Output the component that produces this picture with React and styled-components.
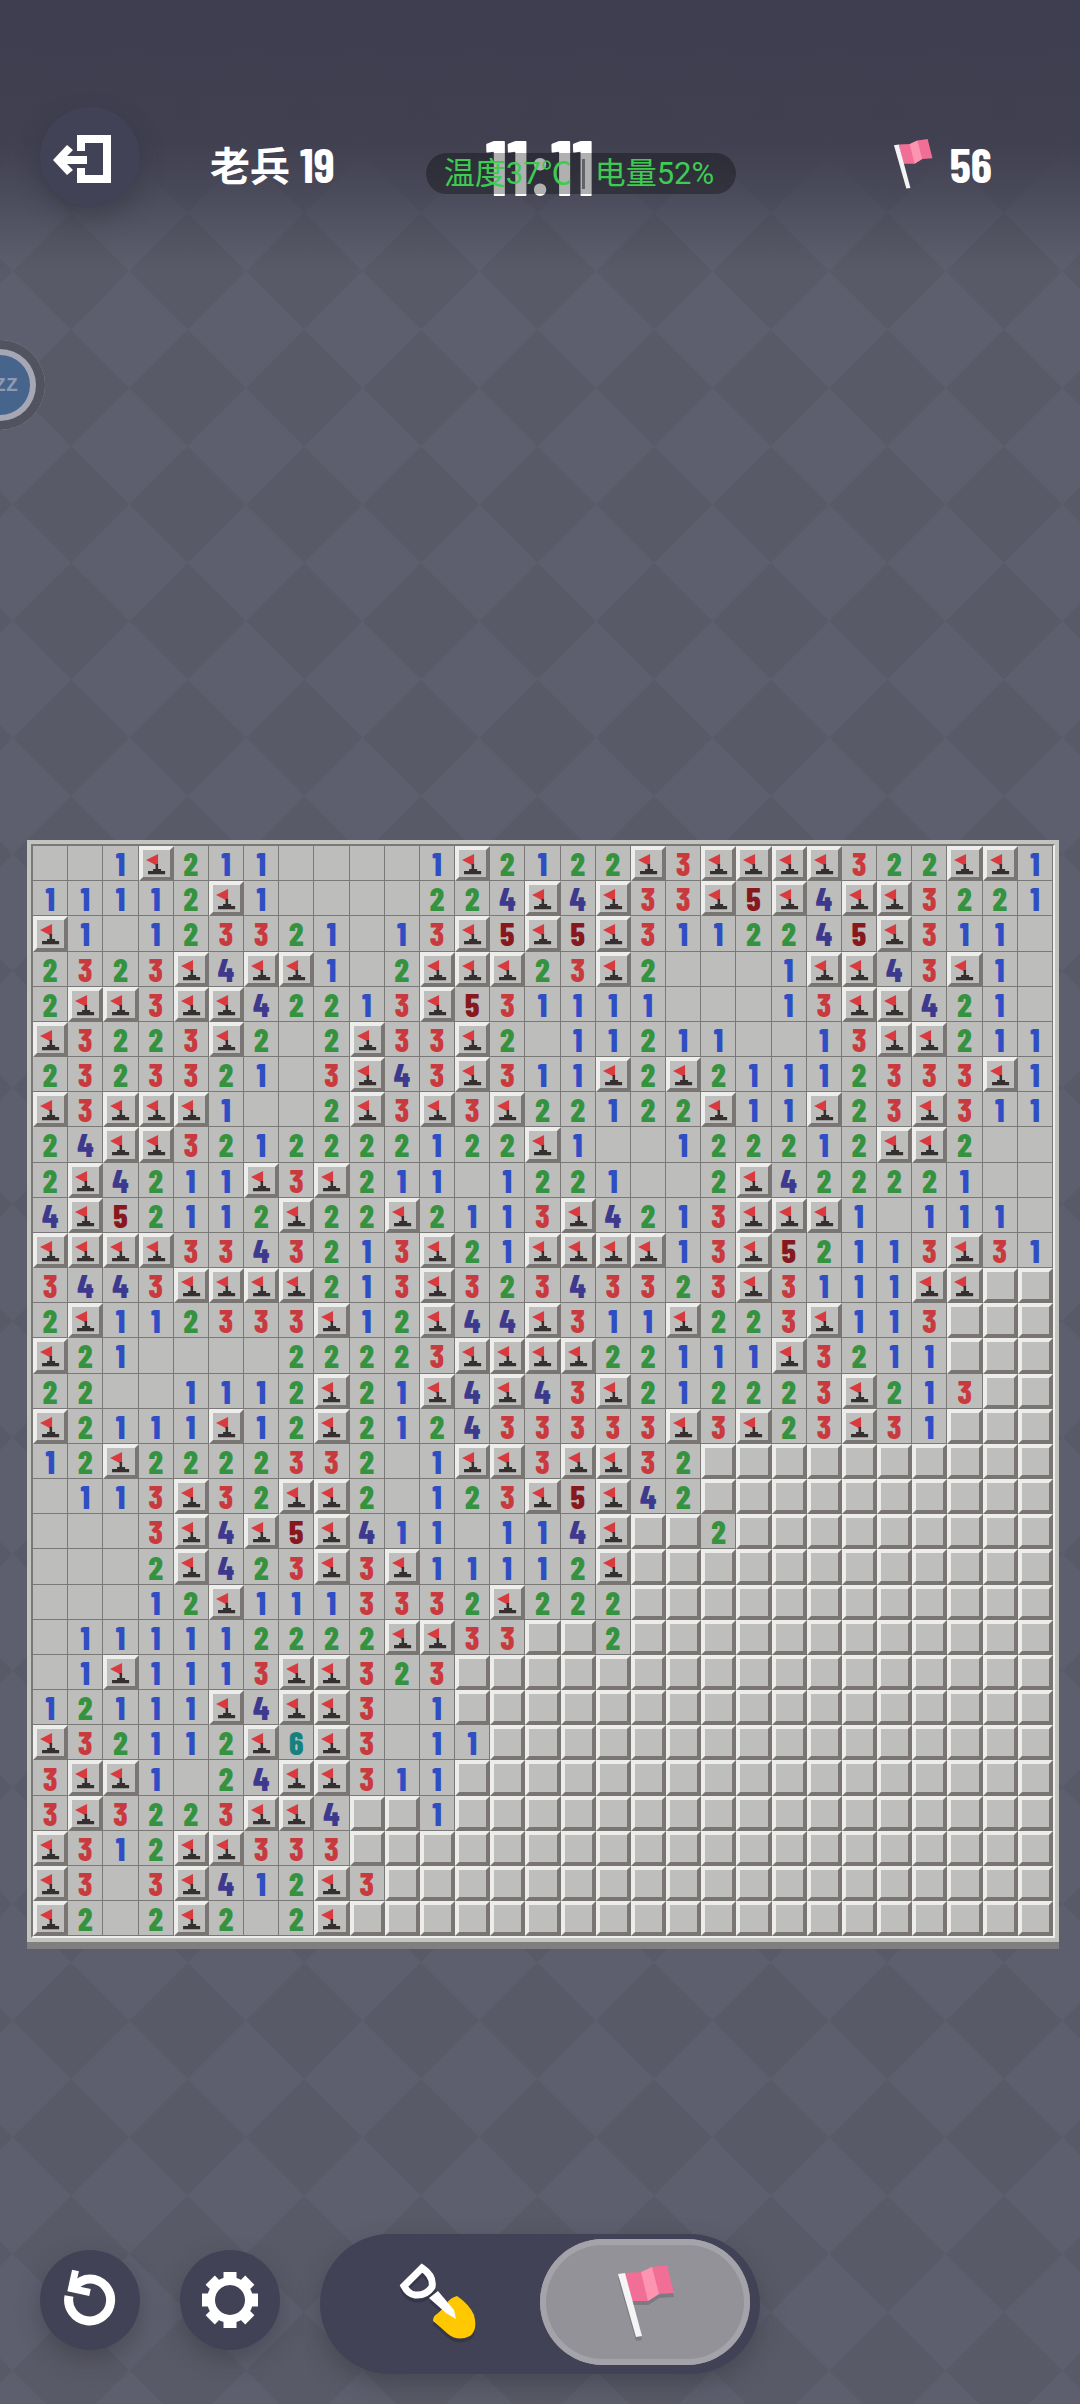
import React, { useState } from 'react'
import styled, { createGlobalStyle } from 'styled-components';

const COLUMNS = 29

// "." opened, "F" flagged, "#" still covered, the tail of a row is covered
const ROWS = [
  '..1F211....1F2122F3FFFF322FF1',
  '11112F1....224F4F33F5F4FF3221',
  'F1.123321.13F5F5F3112245F311.',
  '2323F4FF1.2FFF23F2...1FF43F1.',
  '2FF3FF42213F531111...13FF421.',
  'F3223F2.2F33F2.11211..13FF211',
  '2323321.3F43F311F2F21112333F1',
  'F3FFF1..2F3F3F22122F11F23F311',
  '24FF321222' + '2122F1..12' + '2212FF2..',
  '2F4211F3F2' + '11.1221..2' + 'F422221..',
  '4F52112F22' + 'F2113F4213' + 'FFF1.111.',
  'FFFF334321' + '3F21FFFF13' + 'F52113F31',
  '3443FFFF21' + '3F32343323' + 'F3111FF',
  '2F112333F1' + '2F44F311F2' + '23F113',
  'F21....222' + '23FFFF2211' + '1F3211',
  '22..1112F2' + '1F4F43F212' + '223F213',
  'F2111F12F2' + '12433333F3' + 'F23F31',
  '12F2222332' + '.1FF3FF32',
  '.113F32FF2' + '.123F5F42',
  '...3F4F5F4' + '11.114F##2',
  '...2F423F3' + 'F11112F',
  '...12F1113' + '332F222',
  '.111112222' + 'FF33##2',
  '.1F1113FF3' + '23',
  '12111F4FF3' + '.1',
  'F32112F6F3' + '.11',
  '3FF1.24FF3' + '11',
  '3F3223FF4#' + '#1',
  'F312FF333',
  'F3.3F412F3',
  'F2.2F2.2F',
].map((row) => row.padEnd(COLUMNS, '#'))

const NUMBER_COLORS = {
  1: '#2f4ec4',
  2: '#35923e',
  3: '#c93a3e',
  4: '#3d3a8e',
  5: '#86181e',
  6: '#16827f',
}

const MineFlag = () => (
  <CellFlag viewBox="0 0 35 35" aria-hidden="true">
    <path d="M7 14 L19 8 V19 H16.5 Z" fill="#d83a3e" />
    <path d="M16.5 18 H19 V23 H22 V25 H26 V28 H9 V25 H14 V23 H16.5 Z" fill="#352f30" />
  </CellFlag>
)

const PinkFlag = ({ size, shadow }) => (
  <Icon width={size} height={size} viewBox="0 0 80 80" $shadow={shadow} aria-hidden="true">
    <path d="M20 11 L37 10 L47 5 L62 3 L69 31 L54 32 L43 39 L27 39 Z" fill="#f16f97" />
    <path d="M36 10 L47 5 L54 32 L43 39 Z" fill="#fd94b0" />
    <path d="M13 12 L20 11 L37 74 L31 75 Z" fill="#f4f3f5" />
  </Icon>
)

const ExitIcon = () => (
  <Icon width="80" height="54" viewBox="0 0 80 54" aria-hidden="true">
    <path d="M31 21 V9 H57 V49 H31 V38" fill="none" stroke="#fff" strokeWidth="8" />
    <path d="M3 30 L17 15 L23 20 L17 26 H37 V34 H17 L23 40 L17 45 Z" fill="#fff" />
  </Icon>
)

const RestartIcon = () => (
  <Icon width="60" height="60" viewBox="-30 -30 60 60" fill="none" stroke="#fff" aria-hidden="true">
    <path d="M-21 -4 A21 21 0 1 0 0 -21 Q-9 -21 -16 -13" strokeWidth="9" />
    <path d="M-14.5 -29.5 L-18.5 -11.5 L0 -7.5" strokeWidth="7" />
  </Icon>
)

const GearIcon = () => (
  <Icon width="60" height="60" viewBox="-30 -30 60 60" fill="#fff" aria-hidden="true">
    <circle r="19" fill="none" stroke="#fff" strokeWidth="8" />
    {[0, 45, 90, 135, 180, 225, 270, 315].map((angle) => (
      <path key={angle} d="M-6.5 -28 H6.5 V-18 H-6.5 Z" transform={`rotate(${angle})`} />
    ))}
  </Icon>
)

const ShovelIcon = () => (
  <Icon width="80" height="80" viewBox="0 0 80 80" $shadow="#36364a" aria-hidden="true">
    <path
      d="M62 34 Q74 42 79 53 Q83 68 75 74 Q63 80 53 72 Q43 63 38 59 Q38 54 42 52 Q50 45 52 41 Q55 36 62 34 Z"
      fill="#ffc800"
    />
    <path d="M34 36 L43 29 L59 48 L61 57 L51 51 Z" fill="#fff" />
    <path
      d="M27 6 L9 24 Q13 32 20 33 Q31 34 37 25 Q39 14 27 6 Z"
      fill="none"
      stroke="#fff"
      strokeWidth="7"
    />
  </Icon>
)

export default function App() {
  const [tool, setTool] = useState('flag')
  return (
    <Page>
      <GlobalStyle />
      <Header>
        <RoundButton aria-label="退出">
          <ExitIcon />
        </RoundButton>
        <Title>
          <Rank>老兵</Rank>
          <span>19</span>
        </Title>
        <Timer>11:11</Timer>
        <Status>
          <span>温度37℃</span>
          <Divider />
          <span>电量52%</span>
        </Status>
        <Counter>
          <PinkFlag size={55} />
          <span>56</span>
        </Counter>
      </Header>
      <Bubble>ZZ</Bubble>
      <Board>
        {ROWS.map((row, y) =>
          row.split('').map((cell, x) => {
            if (cell === 'F') {
              return <CoveredCell key={`${x}-${y}`} aria-label="flag"><MineFlag /></CoveredCell>
            }
            if (cell === '#') {
              return <CoveredCell key={`${x}-${y}`} aria-label="covered" />
            }
            return (
              <OpenCell key={`${x}-${y}`} $color={NUMBER_COLORS[cell]}>
                {cell === '.' ? '' : cell}
              </OpenCell>
            )
          })
        )}
      </Board>
      <Footer>
        <Tools>
          <RoundButton aria-label="重新开始">
            <RestartIcon />
          </RoundButton>
          <RoundButton aria-label="设置">
            <GearIcon />
          </RoundButton>
        </Tools>
        <Switch>
          <SwitchButton $active={tool === 'dig'} aria-label="挖掘" onClick={() => setTool('dig')}>
            <ShovelIcon />
          </SwitchButton>
          <SwitchButton $active={tool === 'flag'} aria-label="插旗" onClick={() => setTool('flag')}>
            <PinkFlag size={80} shadow="#7c7b82" />
          </SwitchButton>
        </Switch>
      </Footer>
    </Page>
  )
}

const GlobalStyle = createGlobalStyle`
  * {
    box-sizing: border-box;
  }
  body {
    margin: 0;
    background: #5e5f6e;
  }
  button {
    border: none;
    padding: 0;
    font-family: inherit;
    cursor: pointer;
  }
`;

const Page = styled.div`
  position: relative;
  display: flex;
  flex-direction: column;
  min-height: 100vh;
  padding: 107px 0 30px;
  overflow: hidden;
  font-family: "Barlow Condensed", "Roboto Condensed", Roboto, "Noto Sans CJK SC", sans-serif;
  background-color: #5e5f6e;
  background-image:
    linear-gradient(#3e3e50 0, rgba(62, 62, 79, 0.94) 140px, rgba(62, 62, 79, 0.6) 195px, rgba(62, 62, 79, 0) 270px),
    linear-gradient(45deg, #595a67 25%, transparent 25%, transparent 75%, #595a67 75%),
    linear-gradient(-45deg, #595a67 25%, transparent 25%, transparent 75%, #595a67 75%);
  background-size: 100% 100%, 10.8vw 10.8vw, 10.8vw 10.8vw;
  background-position: 0 0, 71px 38px, 71px 38px;
`;

const Header = styled.header`
  position: relative;
  display: flex;
  align-items: center;
  padding: 0 88px 0 40px;
  color: #fff;
  font-weight: 700;
  font-size: 48px;
`;

const RoundButton = styled.button`
  display: flex;
  align-items: center;
  justify-content: center;
  width: 100px;
  height: 100px;
  border-radius: 50%;
  background: #424256;
  box-shadow: 0 10px 24px rgba(40, 40, 50, 0.35);
`;

const Icon = styled.svg`
  display: block;
  flex: none;
  overflow: visible;
  filter: ${(props) => (props.$shadow ? `drop-shadow(0 4px 0 ${props.$shadow})` : 'none')};
`;

const Title = styled.div`
  display: flex;
  align-items: center;
  gap: 10px;
  margin-left: 70px;
  padding-top: 14px;
`;

const Rank = styled.span`
  font-family: "Noto Sans CJK SC", sans-serif;
  font-size: 40px;
  line-height: 44px;
`;

const Timer = styled.div`
  position: absolute;
  top: 20px;
  left: 50%;
  transform: translateX(-50%);
  font-size: 78px;
  line-height: 76px;
`;

const Status = styled.div`
  position: absolute;
  top: 46px;
  left: 426px;
  display: flex;
  align-items: center;
  justify-content: center;
  gap: 10px;
  width: 310px;
  height: 41px;
  padding-right: 4px;
  border-radius: 21px;
  background: rgba(0, 0, 0, 0.31);
  color: #3ecb52;
  font-family: Roboto, "Noto Sans CJK SC", sans-serif;
  font-weight: 400;
  font-size: 31px;
  line-height: 46px;
`;

const Divider = styled.i`
  width: 3px;
  height: 30px;
  background: #62626d;
`;

const Counter = styled.div`
  display: flex;
  align-items: center;
  gap: 10px;
  margin-left: auto;
  padding-top: 14px;
`;

const Bubble = styled.button`
  position: absolute;
  top: 340px;
  left: -45px;
  width: 90px;
  height: 90px;
  padding-left: 12px;
  border-radius: 50%;
  background: #46648c;
  box-shadow: inset 0 0 0 9px #53535f, inset 0 0 0 15px #a6a7b4;
  color: #8c9bb2;
  font-family: "Liberation Mono", monospace;
  font-weight: 700;
  font-size: 20px;
`;

const Board = styled.main`
  display: grid;
  grid-template-columns: repeat(${COLUMNS}, minmax(0, 1fr));
  margin: 637px 25px 0 31px;
  border: 2px solid;
  border-color: #7b7977 #eeeeec #eeeeec #7b7977;
  box-shadow: 0 0 0 4px #c3c3c0, 0 7px 0 4px #7f7f7f;
`;

const OpenCell = styled.button`
  display: flex;
  align-items: center;
  justify-content: center;
  aspect-ratio: 1;
  min-width: 0;
  border-right: 1px solid #7b7977;
  border-bottom: 1px solid #7b7977;
  background: #bdbdbb;
  color: ${(props) => props.$color || 'inherit'};
  font-weight: 800;
  font-size: 32px;
  line-height: 34px;
`;

const CoveredCell = styled.button`
  position: relative;
  aspect-ratio: 1;
  min-width: 0;
  border: 4px solid;
  border-color: #ededeb #797573 #797573 #ededeb;
  background: #bebebc;
`;

const CellFlag = styled.svg`
  position: absolute;
  inset: -4px;
`;

const Footer = styled.footer`
  display: flex;
  align-items: center;
  gap: 40px;
  margin-top: auto;
  padding: 0 40px;
`;

const Tools = styled.div`
  display: flex;
  gap: 40px;
  padding-bottom: 8px;
`;

const Switch = styled.div`
  display: grid;
  grid-template-columns: 1fr 1fr;
  width: 440px;
  height: 140px;
  padding: 5px 10px 9px;
  border-radius: 70px;
  background: #424256;
  box-shadow: 0 10px 24px rgba(40, 40, 50, 0.35);
`;

const SwitchButton = styled.button`
  display: flex;
  align-items: center;
  justify-content: center;
  border-radius: 63px;
  background: ${(props) => (props.$active ? '#939298' : 'transparent')};
  box-shadow: ${(props) => (props.$active ? 'inset 0 0 0 6px #a4a3aa' : 'none')};
`;
